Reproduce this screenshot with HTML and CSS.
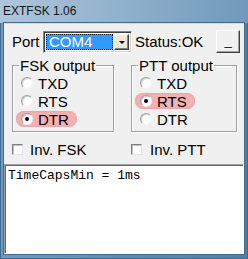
FILE: index.html
```html
<!DOCTYPE html>
<html lang="en">
<head>
    <meta charset="UTF-8">
    <title>EXTFSK 1.06</title>
    <link rel="stylesheet" href="styles.css">
</head>
<body>
    <div class="window">
        <div class="titlebar">EXTFSK 1.06</div>
        <div class="client">
            <div class="toprow">
                <span class="port-label">Port</span>
                <div class="combo">
                    <div class="combo-value"><span class="combo-sel">COM4</span></div>
                    <div class="combo-btn"><span class="arrow"></span></div>
                </div>
                <span class="status">Status:OK</span>
                <button class="min-btn">_</button>
            </div>

            <div class="groups">
                <fieldset class="group">
                    <legend>FSK output</legend>
                    <div class="opt"><span class="radio"></span>TXD</div>
                    <div class="opt"><span class="radio"></span>RTS</div>
                    <div class="opt on"><span class="radio checked"></span>DTR</div>
                </fieldset>
                <fieldset class="group">
                    <legend>PTT output</legend>
                    <div class="opt"><span class="radio"></span>TXD</div>
                    <div class="opt on"><span class="radio checked"></span>RTS</div>
                    <div class="opt"><span class="radio"></span>DTR</div>
                </fieldset>
            </div>

            <div class="checks">
                <label class="check"><span class="box"></span>Inv. FSK</label>
                <label class="check ptt"><span class="box"></span>Inv. PTT</label>
            </div>

            <div class="log">TimeCapsMin = 1ms</div>
        </div>
    </div>
</body>
</html>
```

FILE: styles.css
```css
* {
    margin: 0;
    padding: 0;
    box-sizing: border-box;
}

body {
    background: #5f8db2;
    font-family: 'Liberation Sans', Arial, sans-serif;
    color: #000;
}

.window {
    width: 248px;
    height: 259px;
    display: flex;
    flex-direction: column;
    background: linear-gradient(to right, #6f9abd, #5f8db2 50%, #4f7fa6);
    border-left: 1px solid #3f6d92;
    border-right: 1px solid #3f6d92;
    border-bottom: 1px solid #3f6d92;
}

.titlebar {
    height: 23px;
    padding: 4px 0 0 3px;
    font-size: 12px;
    line-height: 15px;
    color: #141414;
    background: linear-gradient(to right, #aec6da, #93b3cd 45%, #7099bb);
    margin: 0 -1px;
}

.client {
    flex: 1;
    margin: 0 3px 4px 3px;
    background: #f0f0f0;
    display: flex;
    flex-direction: column;
    border-top: 1px solid #cfdbe6;
    box-shadow: 0 0 0 1px #3f6d92;
}

/* top row */
.toprow {
    display: flex;
    align-items: center;
    height: 23px;
    margin-top: 6px;
    padding: 0 4px 0 8px;
    font-size: 15px;
}

.port-label {
    width: 31px;
}

.combo {
    width: 89px;
    height: 22px;
    display: flex;
    background: #fff;
    border-top: 1px solid #808080;
    border-left: 1px solid #808080;
    border-right: 1px solid #fff;
    border-bottom: 1px solid #fff;
    box-shadow: inset 1px 1px 0 #404040, inset -1px -1px 0 #d4d0c8;
    padding: 2px;
}

.combo-value {
    flex: 1;
    padding-right: 1px;
}

.combo-sel {
    display: block;
    height: 16px;
    background: #3399ff;
    color: #fff;
    padding-left: 2px;
    outline: 1px dotted #000;
    outline-offset: -1px;
    border: 1px dotted #fff;
    line-height: 14px;
}

.combo-btn {
    width: 15px;
    height: 16px;
    background: #ece9d8;
    border-top: 1px solid #fff;
    border-left: 1px solid #fff;
    border-right: 1px solid #404040;
    border-bottom: 1px solid #404040;
    box-shadow: inset -1px -1px 0 #808080;
    display: flex;
    align-items: center;
    justify-content: center;
}

.arrow {
    width: 0;
    height: 0;
    border-left: 3px solid transparent;
    border-right: 3px solid transparent;
    border-top: 3px solid #000;
    margin-top: 1px;
}

.status {
    margin-left: 3px;
}

.min-btn {
    margin-left: auto;
    width: 24px;
    height: 23px;
    font-family: 'Liberation Sans', Arial, sans-serif;
    font-size: 13px;
    line-height: 13px;
    background: #f0f0f0;
    border-top: 1px solid #fff;
    border-left: 1px solid #fff;
    border-right: 1px solid #404040;
    border-bottom: 1px solid #404040;
    box-shadow: inset -1px -1px 0 #a0a0a0;
    padding-bottom: 3px;
}

/* group boxes */
.groups {
    display: flex;
    gap: 17px;
    padding-left: 8px;
    margin-top: 4px;
}

.group {
    border: 1px solid #a0a0a0;
    box-shadow: 1px 1px 0 #fff, inset 1px 1px 0 #fff;
    padding: 0 0 3px 0;
    margin: 0;
    font-size: 15px;
    width: 102px;
}

.group + .group {
    width: 106px;
}

.group legend {
    margin-left: 6px;
    padding: 0 1px;
    line-height: 17px;
}

.opt {
    height: 18px;
    display: flex;
    align-items: center;
    padding-left: 3px;
}

.opt .radio {
    margin-left: 5px;
    margin-right: 5px;
}

.opt.on {
    width: fit-content;
    height: 16px;
    margin: 1px 0;
    margin-left: 3px;
    padding: 0 8px 0 5px;
    background: #f3b1b4;
    border-radius: 8px;
    box-shadow: inset 0 0 2px #e58a90;
}

.opt.on .radio {
    margin-left: 0;
}

.radio {
    width: 12px;
    height: 12px;
    border-radius: 50%;
    background: #fff;
    border: 1px solid;
    border-color: #a0a0a0 #f4f4f4 #f4f4f4 #a0a0a0;
    box-shadow: inset 1px 1px 0 #d0d0d0;
    position: relative;
    flex: none;
}

.radio.checked::after {
    content: '';
    position: absolute;
    left: 3px;
    top: 3px;
    width: 4px;
    height: 4px;
    border-radius: 50%;
    background: #000;
}

/* check boxes */
.checks {
    display: flex;
    gap: 17px;
    padding-left: 8px;
    margin-top: 9px;
    height: 17px;
    font-size: 15px;
}

.check {
    width: 102px;
    display: flex;
    align-items: center;
    gap: 7px;
}

.check.ptt {
    gap: 8px;
}

.box {
    width: 11px;
    height: 11px;
    background: #fff;
    border: 1px solid;
    border-color: #808080 #e4e4e4 #e4e4e4 #808080;
    box-shadow: inset 1px 1px 0 #c0c0c0;
}

/* log */
.log {
    flex: 1;
    margin-top: 6px;
    background: #fff;
    border-top: 1px solid #a0a0a0;
    border-left: 1px solid #a0a0a0;
    border-right: 1px solid #fff;
    border-bottom: 1px solid #fff;
    box-shadow: inset 1px 1px 0 #696969;
    font-family: 'Liberation Mono', 'Courier New', monospace;
    font-size: 13px;
    line-height: 15px;
    padding: 3px 3px;
}
```
